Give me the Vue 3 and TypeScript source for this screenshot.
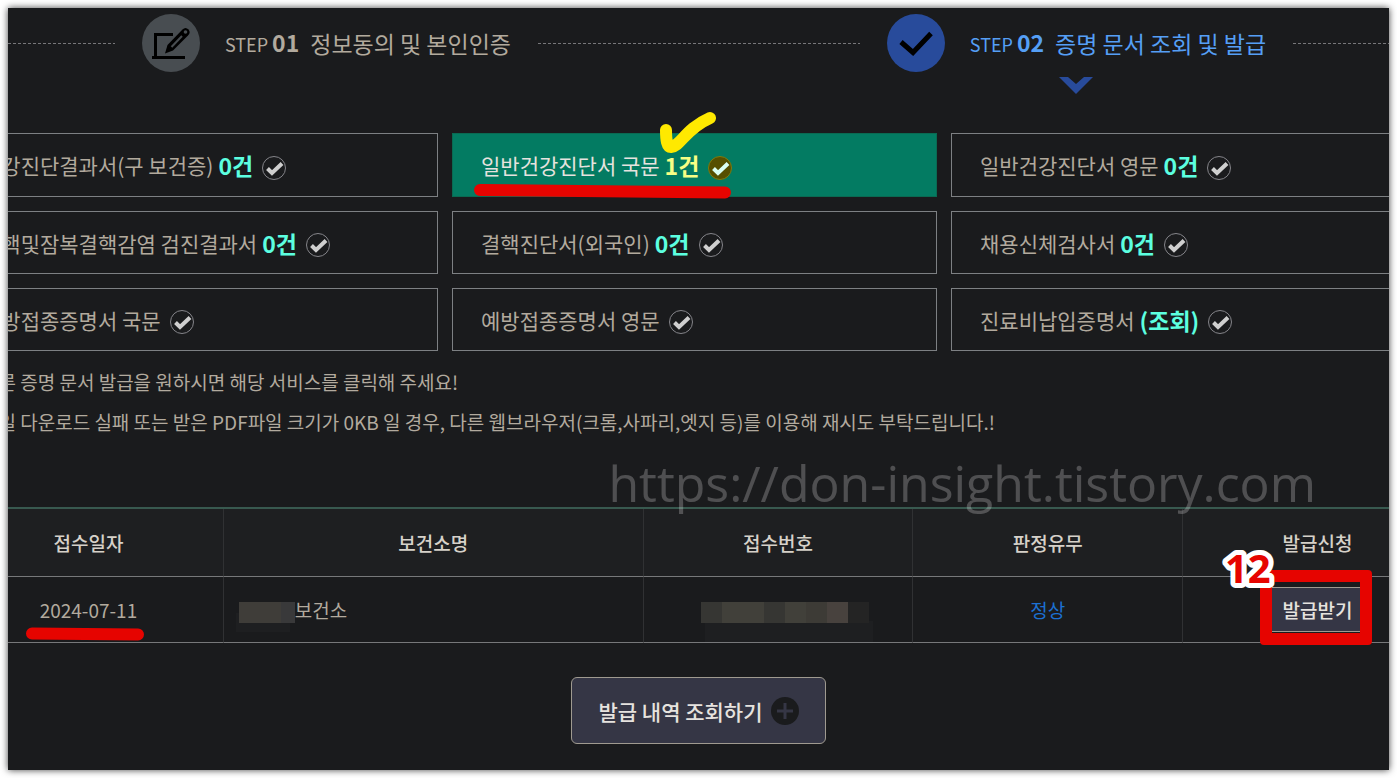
<script setup lang="ts">
interface DocumentCard {
  label: string
  count?: string
  active?: boolean
}

interface Receipt {
  date: string
  office: string
  verdict: string
}

const cards: DocumentCard[] = [
  { label: '건강진단결과서(구 보건증)', count: '0건' },
  { label: '일반건강진단서 국문', count: '1건', active: true },
  { label: '일반건강진단서 영문', count: '0건' },
  { label: '결핵및잠복결핵감염 검진결과서', count: '0건' },
  { label: '결핵진단서(외국인)', count: '0건' },
  { label: '채용신체검사서', count: '0건' },
  { label: '예방접종증명서 국문' },
  { label: '예방접종증명서 영문' },
  { label: '진료비납입증명서', count: '(조회)' },
]

const notices: string[] = [
  '다른 증명 문서 발급을 원하시면 해당 서비스를 클릭해 주세요!',
  '파일 다운로드 실패 또는 받은 PDF파일 크기가 0KB 일 경우, 다른 웹브라우저(크롬,사파리,엣지 등)를 이용해 재시도 부탁드립니다.!',
]

const headers: string[] = ['접수일자', '보건소명', '접수번호', '판정유무', '발급신청']

const receipts: Receipt[] = [{ date: '2024-07-11', office: '보건소', verdict: '정상' }]
</script>

<template>
  <main class="panel">
    <ol class="steps">
      <li class="rule rule-start" aria-hidden="true"></li>
      <li class="step">
        <svg class="step-icon" viewBox="0 0 58 58" aria-hidden="true">
          <circle cx="29" cy="29" r="29" fill="#484d51" />
          <path d="M31 20.500H13.500V43" fill="none" stroke="#000" stroke-width="3" />
          <path d="M10 43.500H43" stroke="#000" stroke-width="3" />
          <path
            d="M23 39.500L25.500 31L40.500 15.500Q43.500 12.500 46.500 15.500Q49 18.500 46 21.500L31 36.500Z"
            fill="#000"
          />
          <path d="M29.500 33L40 22" stroke="#484d51" stroke-width="2" />
          <circle cx="43.500" cy="18" r="1.800" fill="#484d51" />
        </svg>
        <span class="step-no">STEP <b>01</b></span>
        <span class="step-name">정보동의 및 본인인증</span>
      </li>
      <li class="rule rule-middle" aria-hidden="true"></li>
      <li class="step current" aria-current="step">
        <svg class="step-icon" viewBox="0 0 58 58" aria-hidden="true">
          <circle cx="29" cy="29" r="29" fill="#284b9b" />
          <path d="M14 28L26 38.500L44 19.500" fill="none" stroke="#000" stroke-width="5" />
        </svg>
        <span class="step-no">STEP <b>02</b></span>
        <span class="step-name">증명 문서 조회 및 발급</span>
        <svg class="step-arrow" viewBox="0 0 34 17" aria-hidden="true">
          <path d="M0 0H9L17 7L25 0H34L17 17Z" fill="#284b9b" />
        </svg>
      </li>
      <li class="rule rule-end" aria-hidden="true"></li>
    </ol>

    <section class="cards">
      <button
        v-for="card in cards"
        :key="card.label"
        type="button"
        class="card"
        :class="{ active: card.active }"
      >
        <span class="card-label">{{ card.label }}</span>
        <strong v-if="card.count" class="card-count">{{ card.count }}</strong>
        <svg class="card-check" viewBox="0 0 24 24" aria-hidden="true">
          <circle class="ring" cx="12" cy="12" r="11.500" />
          <path class="tick" d="M5.500 12.500L10 17L20 7.500" />
        </svg>
        <svg v-if="card.active" class="marker" viewBox="0 0 270 100" aria-hidden="true">
          <path d="M18 74L263 76.500" stroke="#e60400" />
          <path d="M204 14C204 24 205 31 209 31C219 30 223 13 248 2" stroke="#ffe900" />
        </svg>
      </button>
    </section>

    <section class="notices">
      <p v-for="notice in notices" :key="notice">{{ notice }}</p>
    </section>

    <section class="receipts">
      <div class="watermark">https://don-insight.tistory.com</div>
      <table>
        <thead>
          <tr>
            <th v-for="header in headers" :key="header" scope="col">{{ header }}</th>
          </tr>
        </thead>
        <tbody>
          <tr v-for="receipt in receipts" :key="receipt.date">
            <td>
              <span class="date">
                {{ receipt.date }}
                <svg class="date-marker" viewBox="0 0 120 14" aria-hidden="true">
                  <path d="M7 6.500L113 7.500" />
                </svg>
              </span>
            </td>
            <td class="office">
              <span class="office-line"><i class="mask-name"></i>{{ receipt.office }}</span>
            </td>
            <td>
              <span class="mask-number" aria-hidden="true">
                <i class="m1"></i><i class="m2"></i><i class="m2"></i><i class="m1"></i><i class="m2"></i
                ><i class="m3"></i><i class="m4"></i><i class="m5"></i>
              </span>
            </td>
            <td class="verdict">{{ receipt.verdict }}</td>
            <td>
              <span class="issue">
                <button type="button" class="issue-button">발급받기</button>
                <span class="issue-frame"></span>
                <svg class="issue-number" viewBox="0 0 60 50">
                  <text x="6" y="40">12</text>
                </svg>
              </span>
            </td>
          </tr>
        </tbody>
      </table>
    </section>

    <button type="button" class="history">
      발급 내역 조회하기
      <svg viewBox="0 0 28 28" aria-hidden="true">
        <circle cx="14" cy="14" r="14" fill="#1a1b1d" />
        <path d="M6 14H22M14 6V22" stroke="#353645" stroke-width="3" />
      </svg>
    </button>
  </main>
</template>

<style>
body {
  margin: 0;
  background: #fff;
}
</style>

<style scoped>
.panel {
  box-sizing: border-box;
  min-height: calc(100vh - 16px);
  margin: 8px;
  padding-top: 6px;
  overflow: hidden;
  background: #1a1b1d;
  box-shadow: 0 0 7px rgba(0, 0, 0, 0.75);
  color: #b2aa9e;
  font-family: "Noto Sans CJK KR", "Noto Sans", sans-serif;
  font-size: 19px;
}

button {
  margin: 0;
  font-family: inherit;
  cursor: pointer;
}

.steps {
  display: flex;
  align-items: center;
  gap: 27px;
  margin: 0;
  padding: 0;
  list-style: none;
}

.rule {
  height: 1px;
  background: repeating-linear-gradient(90deg, #77777a 0 3px, transparent 3px 5px);
}

.rule-start {
  flex: 106 0 0;
}

.rule-middle {
  flex: 319 0 0;
}

.rule-end {
  flex: 95 0 0;
}

.step {
  position: relative;
  display: flex;
  align-items: center;
  height: 58px;
  white-space: nowrap;
  line-height: 58px;
}

.step-icon {
  width: 58px;
  height: 58px;
  margin-right: 25px;
}

.step-no {
  margin-right: 11px;
  font-size: 18px;
}

.step-no b {
  font-size: 23px;
}

.step-name {
  font-size: 23px;
}

.current {
  color: #559ff5;
}

.step-arrow {
  position: absolute;
  top: 63px;
  left: 50%;
  width: 34px;
  height: 17px;
  transform: translateX(-50%);
}

.cards {
  display: grid;
  grid-template-columns: repeat(3, 1fr);
  grid-template-rows: 64px;
  grid-auto-rows: 63px;
  gap: 14px;
  margin: 61px -47px 0 -55px;
}

.card {
  position: relative;
  display: flex;
  align-items: center;
  min-width: 0;
  padding: 0 28px;
  border: 1px solid #7d8083;
  background: transparent;
  color: #b2aa9e;
  font-size: 21px;
  line-height: 32px;
  white-space: nowrap;
}

.card-count {
  margin-left: 5px;
  color: #5cffe0;
  font-size: 23px;
}

.card-check {
  width: 24px;
  height: 24px;
  margin: 5px 0 0 9px;
}

.ring {
  fill: none;
  stroke: #85858a;
}

.tick {
  fill: none;
  stroke: #cfcfcf;
  stroke-width: 4;
}

.active {
  border-color: #0a6a52;
  background: #037b62;
  color: #e6e3df;
}

.active .card-count {
  color: #f7ff85;
}

.active .ring {
  fill: #564f00;
  stroke: #7d7c10;
}

.active .tick {
  stroke: #dafff3;
}

.marker {
  position: absolute;
  top: -18px;
  left: 9px;
  width: 270px;
  height: 100px;
  overflow: visible;
  fill: none;
  stroke-width: 12;
  stroke-linecap: round;
  stroke-linejoin: round;
  pointer-events: none;
}

.notices {
  margin: 11px 0 65px -27px;
}

.notices p {
  margin: 0;
  line-height: 40px;
  white-space: nowrap;
}

.receipts {
  position: relative;
  margin: 0 -64px 0 -54px;
}

.watermark {
  position: absolute;
  top: -60px;
  right: 137px;
  color: rgba(255, 255, 255, 0.23);
  font-family: "Open Sans", sans-serif;
  font-size: 50px;
  line-height: 72px;
  pointer-events: none;
}

table {
  width: 100%;
  border-top: 2px solid #38594f;
  border-spacing: 0;
  table-layout: fixed;
}

th,
td {
  box-sizing: border-box;
  width: 18%;
  padding: 0;
  border-right: 1px solid #303133;
  border-bottom: 1px solid #77787a;
  text-align: center;
}

th:nth-child(2) {
  width: 28%;
}

th {
  height: 68px;
  background: #1e1f21;
  color: #d6d1c9;
  font-weight: 500;
}

td {
  height: 66px;
}

.date {
  position: relative;
}

.date-marker {
  position: absolute;
  top: 31px;
  left: -15px;
  width: 120px;
  height: 14px;
  fill: none;
  stroke: #e60400;
  stroke-width: 12;
  stroke-linecap: round;
}

.office {
  padding-left: 15px;
  text-align: left;
}

.office-line {
  display: flex;
  align-items: center;
}

.mask-name {
  width: 56px;
  height: 21px;
  margin-top: 6px;
  background: linear-gradient(90deg, #3f3d39 75%, #39393a 75%);
  box-shadow: -4px 10px 0 -1px #1e1f21;
}

.mask-number {
  display: flex;
  width: 168px;
  height: 21px;
  margin: 6px auto 0 57px;
  box-shadow: 4px 19px 0 #1e1f21;
}

.mask-number i {
  flex: 1;
}

.m1 {
  background: #363633;
}

.m2 {
  background: #41403a;
}

.m3 {
  background: #3d3b36;
}

.m4 {
  background: #48423e;
}

.m5 {
  background: #242424;
}

.verdict {
  color: #1c70d2;
}

.issue {
  position: relative;
  display: inline-block;
}

.issue-button {
  display: block;
  height: 45px;
  padding: 0 15px;
  border: 1px solid #9f9a90;
  border-radius: 5px;
  background: #353645;
  color: #e6e3df;
  font-size: 19px;
  font-weight: 500;
}

.issue-frame {
  position: absolute;
  inset: -17px -3px -13px -7px;
  border: 12px solid #e60400;
  border-radius: 4px;
  pointer-events: none;
}

.issue-number {
  position: absolute;
  top: -44px;
  left: -48px;
  width: 60px;
  height: 50px;
  overflow: visible;
  fill: #e60400;
  stroke: #fff;
  stroke-width: 10;
  stroke-linejoin: round;
  paint-order: stroke;
  font-family: "Open Sans", sans-serif;
  font-size: 40px;
  font-weight: 700;
}

.history {
  display: flex;
  align-items: center;
  gap: 8px;
  height: 67px;
  margin: 34px auto 0;
  padding: 0 26px;
  border: 1px solid #9f9a90;
  border-radius: 6px;
  background: #353645;
  color: #e6e3df;
  font-size: 21px;
  font-weight: 500;
}

.history svg {
  width: 28px;
  height: 28px;
}
</style>
